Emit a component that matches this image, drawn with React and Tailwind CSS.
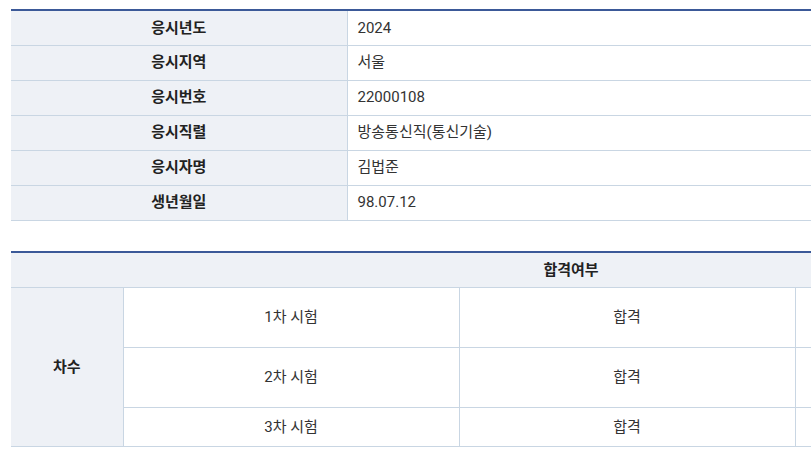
import React from 'react';

const info = [
  ['응시년도', '2024'],
  ['응시지역', '서울'],
  ['응시번호', '22000108'],
  ['응시직렬', '방송통신직(통신기술)'],
  ['응시자명', '김법준'],
  ['생년월일', '98.07.12'],
];

const rounds = [
  { name: '1차 시험', result: '합격', h: 'h-[60px]' },
  { name: '2차 시험', result: '합격', h: 'h-[60px]' },
  { name: '3차 시험', result: '합격', h: 'h-[39px]' },
];

export default function App() {
  return (
    <div
      className="w-[811px] h-[460px] overflow-hidden bg-white text-[15px] text-[#333]"
      style={{ fontFamily: 'Roboto, "Noto Sans CJK KR", sans-serif' }}
    >
      <div className="pl-[11px] pt-[9px]">
        {/* 응시자 정보 */}
        <table className="w-[1120px] border-collapse table-fixed border-t-2 border-t-[#3b5998]">
          <colgroup>
            <col className="w-[336px]" />
            <col />
          </colgroup>
          <tbody>
            {info.map(([label, value]) => (
              <tr key={label} className="h-[35px] border-b border-[#c9d6e3]">
                <th className="bg-[#eef1f6] font-bold text-center text-[#222] border-r border-[#c9d6e3]">
                  {label}
                </th>
                <td className="pl-[10px] text-left">{value}</td>
              </tr>
            ))}
          </tbody>
        </table>

        {/* 합격여부 */}
        <table className="mt-[30px] w-[1120px] border-collapse table-fixed border-t-2 border-t-[#3b5998]">
          <colgroup>
            <col className="w-[112px]" />
            <col className="w-[336px]" />
            <col className="w-[336px]" />
            <col className="w-[336px]" />
          </colgroup>
          <tbody>
            <tr className="h-[36px] border-b border-[#c9d6e3]">
              <th colSpan={4} className="bg-[#eef1f6] font-bold text-center text-[#222]">
                합격여부
              </th>
            </tr>
            {rounds.map((r, i) => (
              <tr key={r.name} className={`${r.h} border-b border-[#c9d6e3]`}>
                {i === 0 && (
                  <th
                    rowSpan={3}
                    className="bg-[#eef1f6] font-bold text-center text-[#222] border-r border-[#c9d6e3]"
                  >
                    차수
                  </th>
                )}
                <td className="text-center border-r border-[#c9d6e3]">{r.name}</td>
                <td className="text-center border-r border-[#c9d6e3]">{r.result}</td>
                <td className="text-center"></td>
              </tr>
            ))}
          </tbody>
        </table>
      </div>
    </div>
  );
}
